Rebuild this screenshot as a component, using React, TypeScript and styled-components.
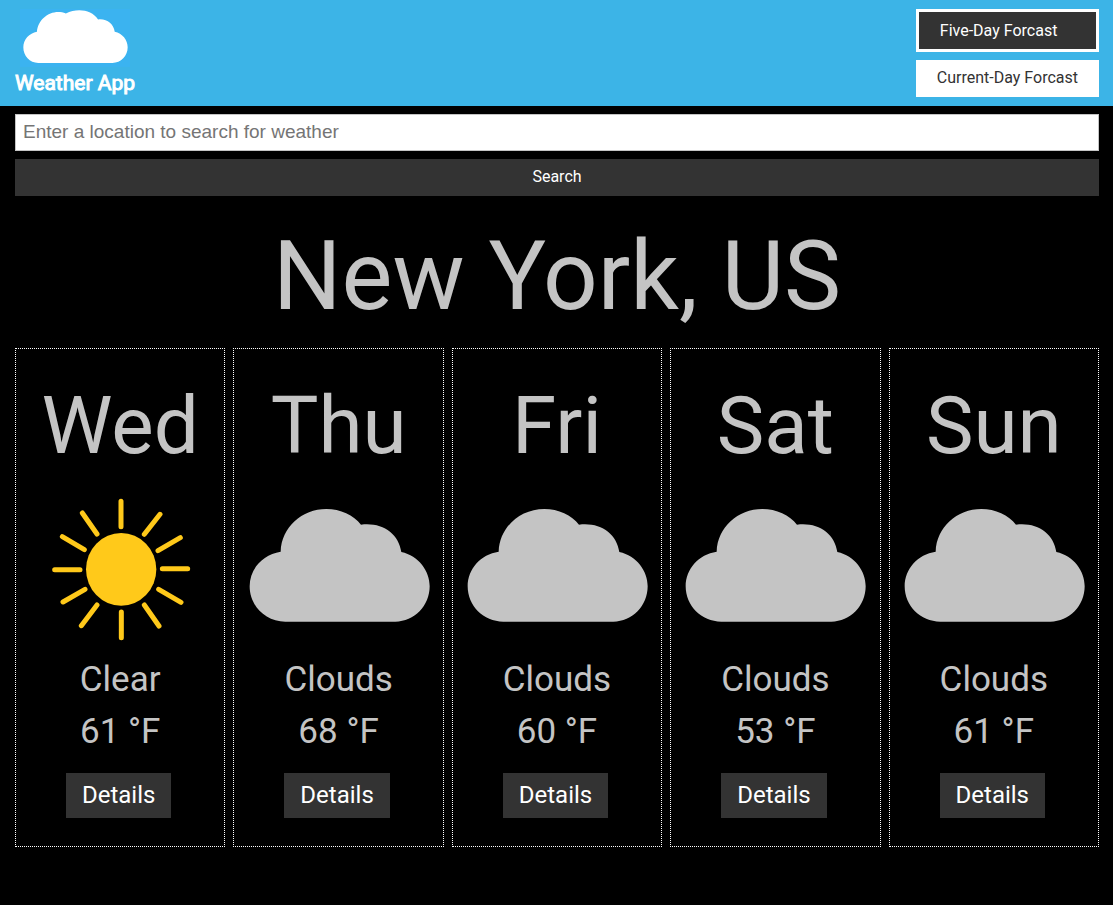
import React from "react";
import styled, { createGlobalStyle } from "styled-components";

const GlobalStyle = createGlobalStyle`
  *, *::before, *::after { box-sizing: border-box; }
  body {
    margin: 0;
    background: #000;
    color: #c4c4c4;
    font-family: Roboto, "Liberation Sans", sans-serif;
    font-size: 16px;
  }
`;

const Header = styled.header`
  display: flex;
  justify-content: space-between;
  align-items: flex-start;
  padding: 9px 14px 7px 15px;
  background: #3cb4e7;
`;

const Brand = styled.div`
  display: flex;
  flex-direction: column;
  align-items: center;
`;

const Logo = styled.svg`
  display: block;
  width: 110px;
  height: 58px;
`;

const BrandName = styled.span`
  color: #fff;
  font-size: 21px;
  font-weight: 400;
  line-height: 32px;
  -webkit-text-stroke: 1px #fff;
`;

const Nav = styled.nav`
  display: flex;
  flex-direction: column;
  gap: 8px;
`;

const Button = styled.button`
  padding: 8px 21px 10px;
  border: 0;
  border-radius: 0;
  background: #333;
  color: #fff;
  font-family: inherit;
  font-size: 16px;
  line-height: 19px;
  cursor: pointer;
`;

const NavButton = styled(Button)<{ $active?: boolean }>`
  padding: ${(p) => (p.$active ? "9px 21px" : "8px 21px 10px")};
  text-align: left;
  border: ${(p) => (p.$active ? "3px solid #fff" : "0")};
  background: ${(p) => (p.$active ? "#333" : "#fff")};
  color: ${(p) => (p.$active ? "#fff" : "#333")};
`;

const Main = styled.main`
  padding: 8px 14px 16px 15px;
`;

const SearchForm = styled.form`
  display: flex;
  flex-direction: column;
  gap: 8px;
`;

const SearchInput = styled.input`
  width: 100%;
  height: 37px;
  padding: 0 7px 2px;
  border: 1px solid #c4c4c4;
  border-radius: 0;
  background: #fff;
  color: #333;
  font-family: "Liberation Sans", Arial, sans-serif;
  font-size: 19px;
  &::placeholder { color: #757575; opacity: 1; }
`;

const Place = styled.h1`
  margin: 24px 0 16px;
  font-size: 96px;
  font-weight: 400;
  line-height: 112px;
  text-align: center;
`;

const Days = styled.section`
  display: grid;
  grid-template-columns: repeat(5, minmax(0, 1fr));
  gap: 8px;
`;

const Card = styled.article`
  display: flex;
  flex-direction: column;
  align-items: center;
  padding: 30px 0 28px;
  border: 1px dotted #fff;
`;

const DayName = styled.h2`
  margin: 0;
  font-size: 80px;
  font-weight: 400;
  line-height: 94px;
`;

const Icon = styled.svg`
  display: block;
  width: 182px;
  max-width: 100%;
  height: 181px;
`;

const Reading = styled.p`
  margin: 0;
  font-size: 35px;
  line-height: 52px;
`;

const DetailsButton = styled(Button)`
  margin: 15px 3px 0 0;
  padding: 8px 16px 9px;
  font-size: 24px;
  line-height: 28px;
`;

const SunIcon = () => (
  <Icon viewBox="0 0 546 543" role="img" aria-label="Sun">
    <g transform="translate(3 36)">
      <ellipse cx="273.500" cy="253" rx="105.500" ry="109" fill="#ffc91a" />
      <path
        d="M273 49V125M390 88L343 148M451 158L384 197M397 251H473M386 313L453 352M343 360L387 423M274 381V458M201 360L154 422M165 313L99 351M150 254H74M163 194L97 155M201 147L157 84"
        fill="none"
        stroke="#ffc91a"
        strokeWidth="15"
        strokeLinecap="round"
      />
    </g>
  </Icon>
);

const CloudIcon = () => (
  <Icon viewBox="0 0 546 543" role="img" aria-label="Cloud">
    <path
      transform="translate(-68 51)"
      fill="#c4c4c4"
      d="M180 395C120 395 73 347 73 289C73 237 112 193 166 185C168 112 230 57 303 57C345 57 385 75 407 104C470 96 520 130 528 186C580 198 613 242 613 289C613 347 567 395 510 395Z"
    />
  </Icon>
);

const forecast = [
  { day: "Wed", sky: "Clear", temp: 61 },
  { day: "Thu", sky: "Clouds", temp: 68 },
  { day: "Fri", sky: "Clouds", temp: 60 },
  { day: "Sat", sky: "Clouds", temp: 53 },
  { day: "Sun", sky: "Clouds", temp: 61 },
];

export default function App() {
  return (
    <>
      <GlobalStyle />
      <Header>
        <Brand>
          <Logo viewBox="57 26 331 174" aria-hidden="true">
            <rect x="57" y="24" width="331" height="176" fill="#3bb3f0" />
            <path
              fill="#fff"
              d="M112 188C86 188 67 167 67 141C67 117 85 98 108 94C111 52 155 23 195 39C230 22 273 28 292 57C318 54 339 70 342 94C365 99 381 118 381 141C381 167 361 188 335 188Z"
            />
          </Logo>
          <BrandName>Weather App</BrandName>
        </Brand>
        <Nav>
          <NavButton type="button" $active>Five-Day Forcast</NavButton>
          <NavButton type="button">Current-Day Forcast</NavButton>
        </Nav>
      </Header>
      <Main>
        <SearchForm onSubmit={(e) => e.preventDefault()}>
          <SearchInput
            type="text"
            aria-label="Location"
            placeholder="Enter a location to search for weather"
          />
          <Button type="submit">Search</Button>
        </SearchForm>
        <Place>New York, US</Place>
        <Days>
          {forecast.map((f) => (
            <Card key={f.day}>
              <DayName>{f.day}</DayName>
              {f.sky === "Clear" ? <SunIcon /> : <CloudIcon />}
              <Reading>{f.sky}</Reading>
              <Reading>{f.temp} °F</Reading>
              <DetailsButton type="button">Details</DetailsButton>
            </Card>
          ))}
        </Days>
      </Main>
    </>
  );
}
